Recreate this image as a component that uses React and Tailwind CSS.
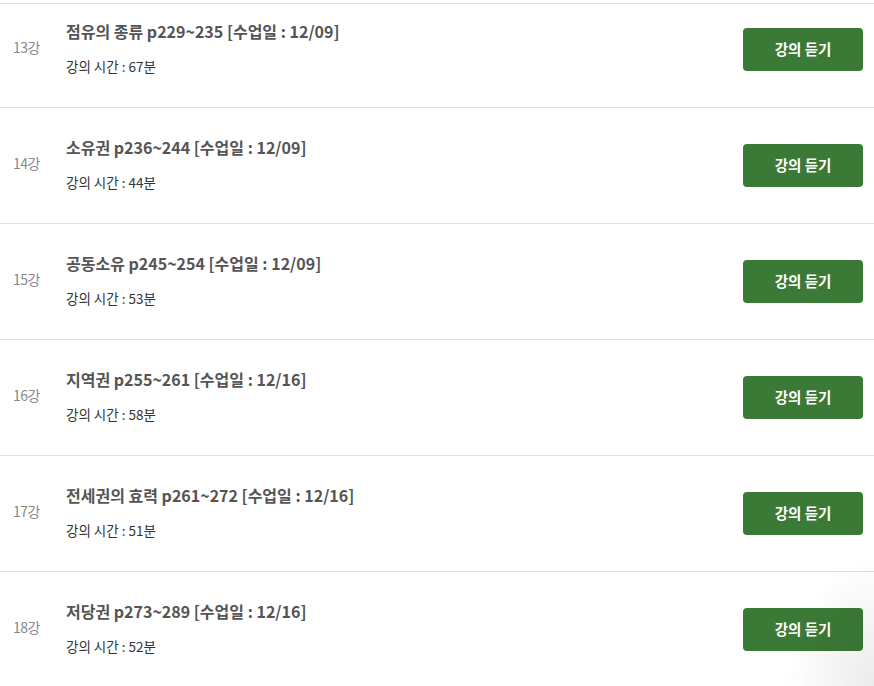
import React from 'react';

const lectures = [
  { no: 13, title: '점유의 종류 p229~235 [수업일 : 12/09]', time: 67 },
  { no: 14, title: '소유권 p236~244 [수업일 : 12/09]', time: 44 },
  { no: 15, title: '공동소유 p245~254 [수업일 : 12/09]', time: 53 },
  { no: 16, title: '지역권 p255~261 [수업일 : 12/16]', time: 58 },
  { no: 17, title: '전세권의 효력 p261~272 [수업일 : 12/16]', time: 51 },
  { no: 18, title: '저당권 p273~289 [수업일 : 12/16]', time: 52 },
];

function LectureRow({ item, first }) {
  return (
    <div
      className={
        'flex items-center border-t border-[#dedede] ' +
        (first ? 'h-[104px] pb-[12px]' : 'h-[116px]')
      }
    >
      <div className="w-[66px] pl-[13px] pb-[4px] text-[14px] text-[#888] tracking-[-0.5px]">{item.no}강</div>
      <div className="flex-1 min-w-0 pb-[4px]">
        <div className="text-[16px] leading-[20px] font-bold text-[#555]">{item.title}</div>
        <div className="mt-[17px] text-[13.5px] leading-[16px] text-[#333]">강의 시간 : {item.time}분</div>
      </div>
      <button className="w-[120px] h-[43px] mr-[11px] pb-[2px] rounded-[4px] bg-[#3b7a36] text-white text-[14.5px] font-bold">
        강의 듣기
      </button>
    </div>
  );
}

export default function App() {
  return (
    <div
      className="relative w-[874px] h-[686px] overflow-hidden bg-white pt-[3px]"
      style={{ fontFamily: '"Noto Sans CJK KR", "Noto Sans", sans-serif' }}
    >
      {lectures.map((item, i) => (
        <LectureRow key={item.no} item={item} first={i === 0} />
      ))}
      {/* soft shade from a floating element off-screen */}
      <div className="pointer-events-none absolute right-0 bottom-0 w-[90px] h-[130px] bg-[radial-gradient(ellipse_at_100%_100%,rgba(0,0,0,0.08),rgba(0,0,0,0)_70%)]" />
    </div>
  );
}
